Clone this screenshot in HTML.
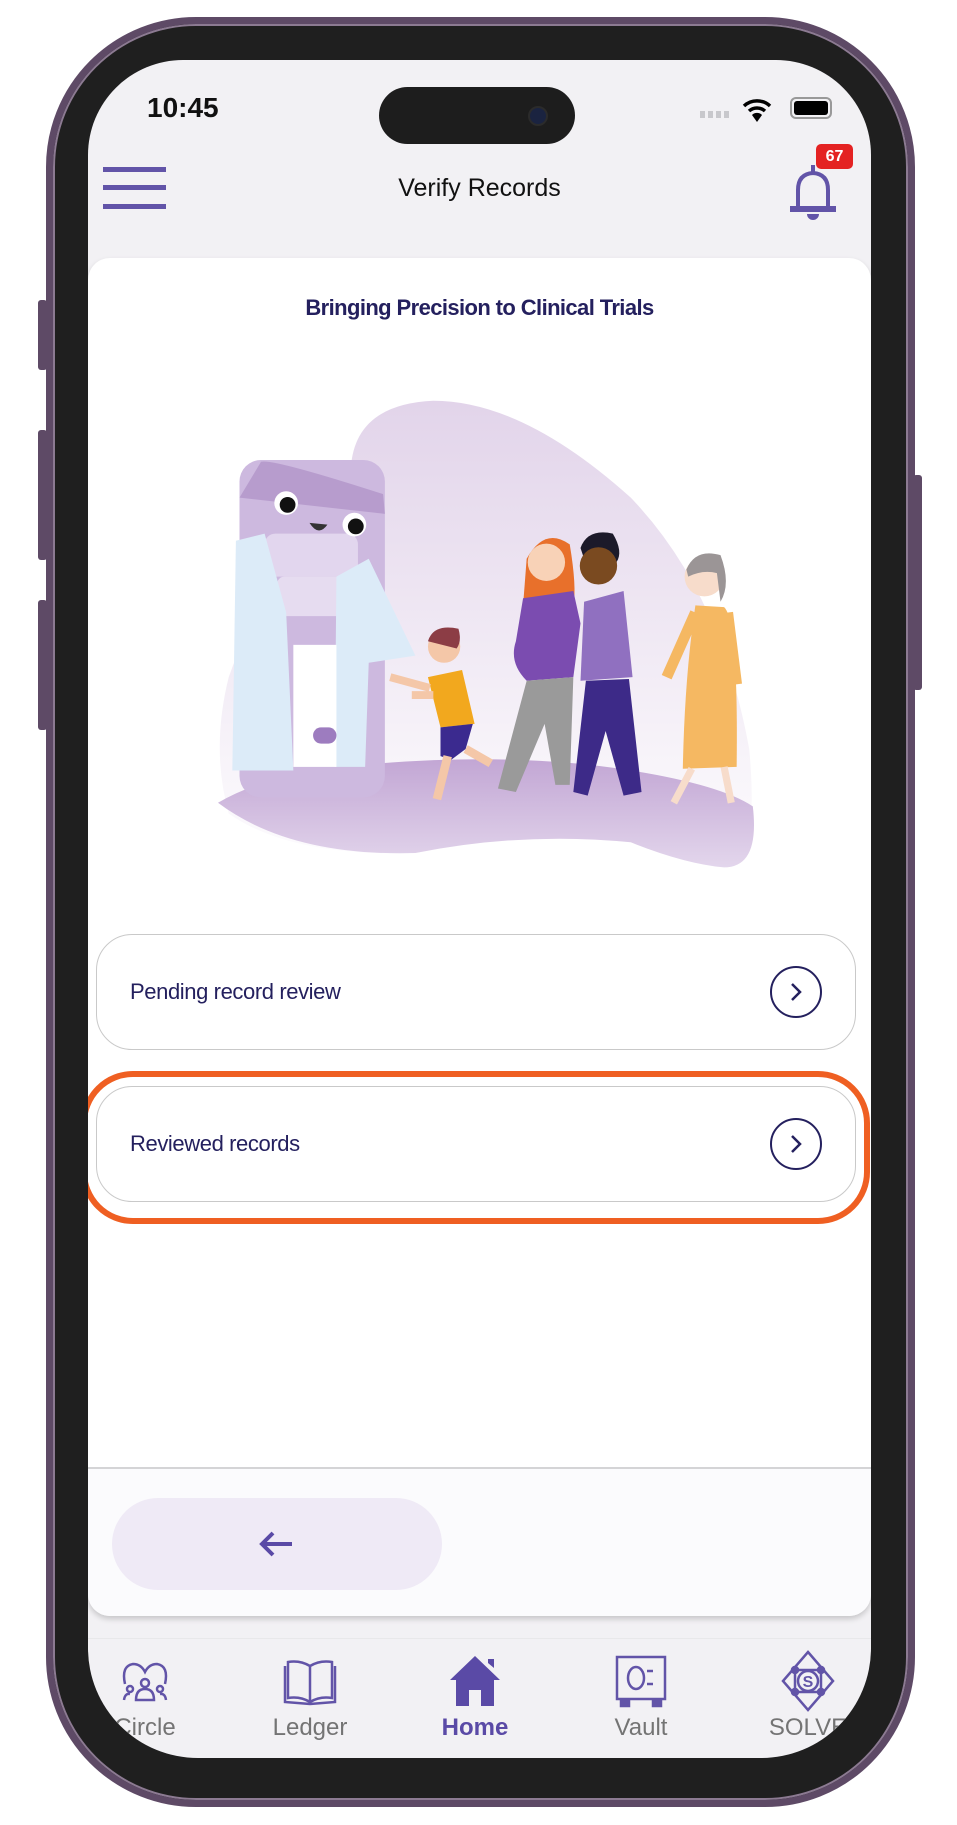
<!DOCTYPE html>
<html><head><meta charset="utf-8"><style>
*{margin:0;padding:0;box-sizing:border-box}
body{width:957px;height:1825px;background:#fff;position:relative;overflow:hidden;font-family:"Liberation Sans",sans-serif}
.abs{position:absolute}
#phone{left:46px;top:17px;width:869px;height:1790px;border-radius:150px;background:#1f1f1f;border:7px solid #5e4a66;box-shadow:0 0 0 2px #8c7a92 inset}
.btn-side{background:#5e4a66;border-radius:3px}
#screen{left:88px;top:60px;width:783px;height:1698px;border-radius:95px 95px 110px 110px;background:#f2f1f4;overflow:hidden}
.t{color:#24205e}
</style></head><body>
<div id="phone" class="abs"></div>
<div class="abs btn-side" style="left:38px;top:300px;width:9px;height:70px"></div>
<div class="abs btn-side" style="left:38px;top:430px;width:9px;height:130px"></div>
<div class="abs btn-side" style="left:38px;top:600px;width:9px;height:130px"></div>
<div class="abs btn-side" style="left:913px;top:475px;width:9px;height:215px"></div>
<div id="screen" class="abs">
  <div class="abs" style="left:59px;top:32px;font-size:28px;font-weight:bold;color:#111">10:45</div>
  <div class="abs" style="left:291px;top:27px;width:196px;height:57px;border-radius:29px;background:#1d1d1d"></div>
  <div class="abs" style="left:440px;top:46px;width:20px;height:20px;border-radius:50%;background:#1a2340;border:2px solid #2b2b2b"></div>
  <div class="abs" style="left:612px;top:51px;width:30px;height:7px;background:repeating-linear-gradient(90deg,#c8c8cc 0 5px,transparent 5px 8px)"></div>
  <svg class="abs" style="left:654px;top:36px" width="30" height="28" viewBox="0 0 30 28"><path d="M2 10 A19 19 0 0 1 28 10" stroke="#000" stroke-width="3.5" fill="none"/><path d="M7 15 A12 12 0 0 1 23 15" stroke="#000" stroke-width="3.5" fill="none"/><path d="M15 26 L10 19 A7 7 0 0 1 20 19Z" fill="#000"/></svg>
  <div class="abs" style="left:702px;top:37px;width:42px;height:22px;border:2px solid #999;border-radius:6px;padding:2px"><div style="width:100%;height:100%;background:#000;border-radius:3px"></div></div>
  <div class="abs" style="left:15px;top:107px;width:63px;height:5px;background:#6254a8"></div>
  <div class="abs" style="left:15px;top:125px;width:63px;height:5px;background:#6254a8"></div>
  <div class="abs" style="left:15px;top:144px;width:63px;height:5px;background:#6254a8"></div>
  <div class="abs" style="left:0;width:783px;top:114px;text-align:center;font-size:25px;color:#111">Verify Records</div>
  <svg class="abs" style="left:696px;top:100px" width="60" height="62" viewBox="0 0 60 62"><path d="M29 5 L29 12 M14 46 L14 30 Q14 14 29 13 Q44 14 44 30 L44 46" stroke="#6254a8" stroke-width="4" fill="none"/><rect x="6" y="46" width="46" height="6" fill="#6254a8"/><path d="M23 54 A6 6 0 0 0 35 54Z" fill="#6254a8"/></svg>
  <div class="abs" style="left:728px;top:84px;width:37px;height:25px;background:#e42222;border-radius:5px;color:#fff;font-size:16px;font-weight:bold;text-align:center;line-height:25px">67</div>
  <div class="abs" style="left:0;top:198px;width:783px;height:1358px;background:#fff;border-radius:22px;box-shadow:0 3px 6px rgba(0,0,0,.18);overflow:hidden">
    <div class="abs t" style="left:0;width:783px;top:37px;text-align:center;font-size:22px;font-weight:bold;letter-spacing:-0.6px">Bringing Precision to Clinical Trials</div>
    <div class="abs" style="left:8px;top:676px;width:760px;height:116px;border:1.5px solid #c9c9c9;border-radius:36px"></div>
    <div class="abs t" style="left:42px;top:721px;font-size:22px;letter-spacing:-0.4px">Pending record review</div>
    <div class="abs" style="left:682px;top:708px;width:52px;height:52px;border:2.5px solid #24205e;border-radius:50%"></div>
    <svg class="abs" style="left:698px;top:722px" width="20" height="24" viewBox="0 0 20 24"><path d="M6 4 L14 12 L6 20" stroke="#24205e" stroke-width="2.5" fill="none"/></svg>
    <div class="abs" style="left:8px;top:828px;width:760px;height:116px;border:1.5px solid #c9c9c9;border-radius:36px"></div>
    <div class="abs t" style="left:42px;top:873px;font-size:22px;letter-spacing:-0.4px">Reviewed records</div>
    <div class="abs" style="left:682px;top:860px;width:52px;height:52px;border:2.5px solid #24205e;border-radius:50%"></div>
    <svg class="abs" style="left:698px;top:874px" width="20" height="24" viewBox="0 0 20 24"><path d="M6 4 L14 12 L6 20" stroke="#24205e" stroke-width="2.5" fill="none"/></svg>
    <div class="abs" style="left:0;top:1209px;width:783px;height:160px;background:#fbfbfd;border-top:2px solid #d4d4d6"></div>
    <div class="abs" style="left:24px;top:1240px;width:330px;height:92px;border-radius:46px;background:#efeaf6"></div>
    <svg class="abs" style="left:168px;top:1271px" width="40" height="30" viewBox="0 0 40 30"><path d="M36 15 L6 15 M17 4 L6 15 L17 26" stroke="#5a4aa6" stroke-width="4" fill="none"/></svg>
  </div>
  <div class="abs" style="left:-7px;top:1011px;width:789px;height:153px;border:6px solid #ef5f22;border-radius:52px"></div>
  <div class="abs" style="left:0;top:1578px;width:783px;height:1px;background:#e8e8ea"></div>
  <svg class="abs" style="left:31px;top:1596px" width="52" height="52" viewBox="0 0 52 52" fill="none" stroke="#6254a8" stroke-width="2.5"><path d="M6 28 Q2 10 14 8 Q22 8 26 16 Q30 8 38 8 Q50 10 46 28"/><circle cx="26" cy="27" r="4"/><path d="M17 44 Q17 33 26 33 Q35 33 35 44Z"/><circle cx="11" cy="33" r="3"/><circle cx="41" cy="33" r="3"/><path d="M5 44 Q6 37 11 38 M47 44 Q46 37 41 38"/></svg>
  <svg class="abs" style="left:194px;top:1598px" width="56" height="50" viewBox="0 0 56 50" fill="none" stroke="#6254a8" stroke-width="2.5"><path d="M28 44 L28 8 Q18 2 6 4 L6 40 Q18 38 28 44 Q38 38 50 40 L50 4 Q38 2 28 8"/><path d="M3 8 L3 44 L28 46 L53 44 L53 8"/></svg>
  <svg class="abs" style="left:360px;top:1594px" width="54" height="54" viewBox="0 0 54 54"><path d="M27 2 L52 26 L46 26 L46 52 L33 52 L33 36 L21 36 L21 52 L8 52 L8 26 L2 26Z M40 5 L46 5 L46 14 L40 9Z" fill="#5a4aa6"/></svg>
  <svg class="abs" style="left:525px;top:1594px" width="56" height="56" viewBox="0 0 56 56" fill="none" stroke="#6254a8" stroke-width="2.5"><rect x="4" y="3" width="48" height="42"/><ellipse cx="23" cy="24" rx="8" ry="11"/><path d="M34 17 L40 17 M34 30 L40 30"/><rect x="8" y="46" width="8" height="6" fill="#6254a8"/><rect x="40" y="46" width="8" height="6" fill="#6254a8"/></svg>
  <svg class="abs" style="left:693px;top:1590px" width="54" height="62" viewBox="0 0 54 62" fill="none" stroke="#6254a8" stroke-width="2.5"><path d="M27 2 L52 31 L27 60 L2 31Z"/><path d="M14 20 L40 20 L40 42 L14 42Z"/><circle cx="27" cy="31" r="10"/><circle cx="14" cy="20" r="3" fill="#6254a8"/><circle cx="40" cy="20" r="3" fill="#6254a8"/><circle cx="14" cy="42" r="3" fill="#6254a8"/><circle cx="40" cy="42" r="3" fill="#6254a8"/><text x="27" y="37" font-family="Liberation Sans" font-size="16" font-weight="bold" fill="#6254a8" stroke="none" text-anchor="middle">S</text></svg>
  <div class="abs" style="left:0;top:1654px;width:783px;font-size:24px;color:#747474">
    <span class="abs" style="left:57px;width:0;display:flex;justify-content:center"><span>Circle</span></span>
    <span class="abs" style="left:222px;width:0;display:flex;justify-content:center"><span>Ledger</span></span>
    <span class="abs" style="left:387px;width:0;display:flex;justify-content:center;color:#5a4aa6;font-weight:bold"><span>Home</span></span>
    <span class="abs" style="left:553px;width:0;display:flex;justify-content:center"><span>Vault</span></span>
    <span class="abs" style="left:720px;width:0;display:flex;justify-content:center"><span>SOLVE</span></span>
  </div>
</div>
<svg class="abs" style="left:200px;top:390px" width="560" height="481" viewBox="0 0 1560 1340">
<defs><linearGradient id="g" x1="0" y1="0" x2="0" y2="1"><stop offset="0" stop-color="#e2d4ea"/><stop offset=".75" stop-color="#f7f3f9"/><stop offset="1" stop-color="#fdfcfe"/></linearGradient>
<linearGradient id="g2" x1="0" y1="0" x2="0" y2="1"><stop offset="0" stop-color="#c2a6d4"/><stop offset="1" stop-color="#e3d6ec"/></linearGradient></defs>
<path d="M420 220 Q430 40 650 30 Q900 30 1200 300 Q1450 560 1530 1000 Q1560 1330 1460 1330 Q1350 1320 1200 1260 Q900 1230 600 1290 Q250 1300 80 1180 Q30 1000 80 800 Q150 600 260 500 Z" fill="url(#g)"/>
<path d="M50 1150 Q200 1060 500 1040 Q900 1010 1200 1060 Q1450 1100 1540 1160 Q1560 1330 1460 1330 Q1350 1320 1200 1260 Q900 1230 600 1290 Q250 1300 50 1150Z" fill="url(#g2)"/>
<rect x="110" y="195" width="405" height="940" rx="60" fill="#cdb9df"/>
<path d="M170 200 Q200 190 510 290 L515 345 L110 300 Z" fill="#b79ccd"/>
<rect x="180" y="400" width="260" height="120" rx="30" fill="#e2d6ee"/>
<rect x="215" y="520" width="190" height="110" rx="20" fill="#e6dcf0"/>
<circle cx="240" cy="315" r="33" fill="#fff"/><circle cx="244" cy="320" r="22" fill="#111"/>
<circle cx="430" cy="375" r="33" fill="#fff"/><circle cx="434" cy="380" r="22" fill="#111"/>
<path d="M305 370 Q330 410 355 375 Z" fill="#333"/>
<path d="M100 420 L180 400 L240 620 L260 1060 L90 1060 Z" fill="#dcebf8"/>
<path d="M470 470 L380 520 L375 1050 L460 1050 L470 760 L600 740 Z" fill="#dcebf8"/>
<rect x="260" y="710" width="120" height="340" fill="#fff"/>
<rect x="315" y="940" width="65" height="45" rx="22" fill="#9d7cbf"/>
<circle cx="680" cy="715" r="45" fill="#f4c7a8"/><path d="M635 700 Q650 650 720 665 Q730 700 715 720 Z" fill="#8c3d45"/>
<path d="M635 800 L730 780 L765 930 L670 940 Z" fill="#f2a81e"/>
<path d="M670 940 L760 930 L740 1000 L700 1030 L670 1020 Z" fill="#3b2a8f"/>
<path d="M530 800 L640 830 M590 850 L650 850" stroke="#f4c7a8" stroke-width="22"/>
<path d="M690 1020 L660 1140 M740 1000 L810 1040" stroke="#f4c7a8" stroke-width="24"/>
<path d="M910 470 Q960 380 1030 430 Q1050 550 1040 600 L900 600 Z" fill="#e8702b"/>
<circle cx="965" cy="480" r="52" fill="#f8d2b7"/>
<path d="M900 580 L1040 560 L1060 650 L1040 800 L910 810 Q860 760 880 700 Z" fill="#7b4cb0"/>
<path d="M910 810 L1040 800 L1030 1100 L990 1100 L960 930 L880 1120 L830 1110 Z" fill="#9a9a9a"/>
<path d="M1060 440 Q1080 385 1150 400 Q1180 450 1160 480 L1070 470Z" fill="#1c1a2a"/>
<circle cx="1110" cy="490" r="52" fill="#7a4a20"/>
<path d="M1070 590 L1180 560 L1205 800 L1060 810 Z" fill="#9070c0"/>
<path d="M1075 810 L1195 805 L1230 1120 L1180 1130 L1130 950 L1080 1130 L1040 1120 Z" fill="#3d2a88"/>
<circle cx="1405" cy="520" r="55" fill="#f7dccb"/><path d="M1355 500 Q1380 440 1450 460 Q1480 540 1450 590 L1440 510 Q1400 500 1360 520Z" fill="#9b9596"/>
<path d="M1380 600 L1460 605 Q1500 640 1495 1050 L1345 1055 Q1350 800 1380 600Z" fill="#f5b862"/>
<path d="M1380 620 L1300 800 M1470 620 L1495 820" stroke="#f5b862" stroke-width="30"/>
<path d="M1370 1055 L1320 1150 M1460 1050 L1480 1150" stroke="#f7dccb" stroke-width="20"/>
</svg>
</body></html>
